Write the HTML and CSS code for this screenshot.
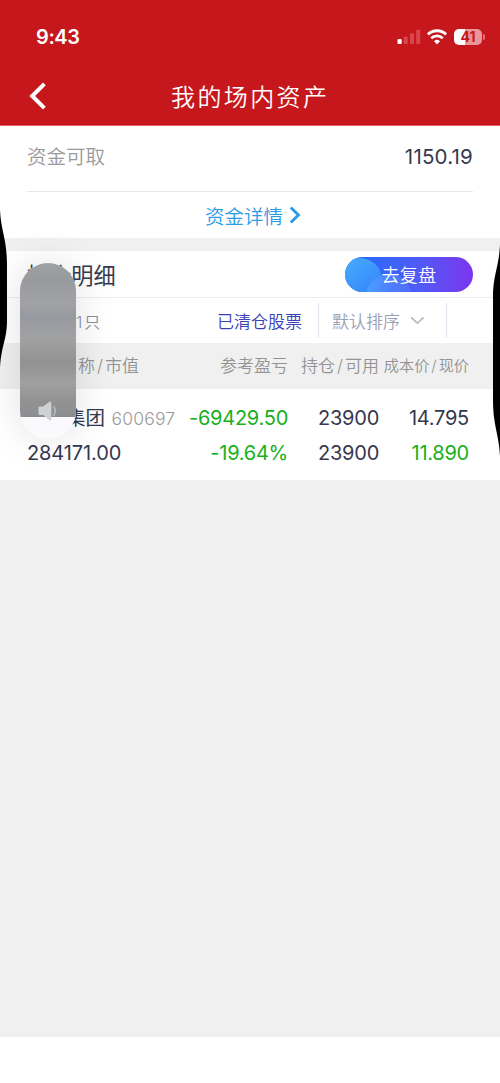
FILE: index.html
```html
<!DOCTYPE html>
<html lang="zh-CN">
<head>
    <meta charset="UTF-8">
    <meta name="viewport" content="width=device-width, initial-scale=1.0">
    <title>我的场内资产</title>
    <link rel="stylesheet" href="styles.css">
</head>
<body>
    <div class="page">
        <header class="header">
            <div class="status-bar">
                <span class="time">9:43</span>
                <div class="status-icons">
                    <svg class="signal" width="24" height="16" viewBox="0 0 24 16">
                        <rect x="0.5" y="10" width="4.2" height="5" rx="1" fill="#fff"/>
                        <rect x="6.8" y="7.5" width="4" height="7.5" rx="1" fill="#d8464c"/>
                        <rect x="13" y="4.3" width="4" height="10.7" rx="1" fill="#d8464c"/>
                        <rect x="19.2" y="0.8" width="4" height="14.2" rx="1" fill="#d8464c"/>
                    </svg>
                    <svg class="wifi" width="20" height="16" viewBox="0 0 20 16">
                        <path d="M0.9 5.4a13.2 13.2 0 0 1 18.2 0" fill="none" stroke="#fff" stroke-width="2.9"/>
                        <path d="M4.2 9.2a8.4 8.4 0 0 1 11.6 0" fill="none" stroke="#fff" stroke-width="2.7"/>
                        <path d="M10 15.4l-3-3.2a4.5 4.5 0 0 1 6 0z" fill="#fff"/>
                    </svg>
                    <div class="battery">41</div>
                </div>
            </div>
            <div class="nav">
                <svg class="back" width="18" height="28" viewBox="0 0 18 28">
                    <path d="M16.4 1.8L4.2 14l12.2 12.2" fill="none" stroke="#fff" stroke-width="4"/>
                </svg>
                <h1>我的场内资产</h1>
            </div>
        </header>

        <section class="funds">
            <div class="funds-row">
                <span class="label">资金可取</span>
                <span class="amount">1150.19</span>
            </div>
            <div class="funds-link">
                <span>资金详情</span>
                <svg width="12" height="18" viewBox="0 0 12 18">
                    <path d="M1.8 1.5L9.4 9l-7.6 7.5" fill="none" stroke="#2b9be6" stroke-width="2.9"/>
                </svg>
            </div>
        </section>

        <section class="positions">
            <div class="positions-title">
                <h2>持仓明细</h2>
                <div class="review">
                    <svg width="128" height="35" viewBox="0 0 128 35">
                        <defs>
                            <linearGradient id="blueA" x1="0.2" y1="0" x2="0.9" y2="0.9">
                                <stop offset="0" stop-color="#45acfc"/>
                                <stop offset="1" stop-color="#3580fb"/>
                            </linearGradient>
                            <linearGradient id="blueB" x1="0" y1="0" x2="1" y2="0">
                                <stop offset="0" stop-color="#4a9cff"/>
                                <stop offset="1" stop-color="#5a78fb" stop-opacity="0.5"/>
                            </linearGradient>
                        </defs>
                        <circle cx="15" cy="23" r="22" fill="url(#blueA)"/>
                        <circle cx="44" cy="40" r="23" fill="url(#blueB)"/>
                    </svg>
                    <span>去复盘</span>
                </div>
            </div>
            <div class="filters">
                <span class="count">共持有<b>1</b>只</span>
                <span class="cleared">已清仓股票</span>
                <span class="sort">默认排序
                    <svg width="15" height="9" viewBox="0 0 15 9">
                        <path d="M1.2 1.5l6.2 5.6 6.2-5.6" fill="none" stroke="#b9bac2" stroke-width="1.7"/>
                    </svg>
                </span>
            </div>
            <div class="grid table-head">
                <span>股票名称<i>/</i>市值</span>
                <span>参考盈亏</span>
                <span>持仓<i>/</i>可用</span>
                <span class="price-head">成本价<i>/</i>现价</span>
            </div>
            <div class="stock">
                <div class="grid">
                    <span class="name">欧亚集团 <small>600697</small></span>
                    <span class="down">-69429.50</span>
                    <span>23900</span>
                    <span>14.795</span>
                </div>
                <div class="grid">
                    <span class="value">284171.00</span>
                    <span class="down">-19.64%</span>
                    <span>23900</span>
                    <span class="down">11.890</span>
                </div>
            </div>
        </section>
        <div class="home-area"></div>

        <!-- volume slider -->
        <div class="volume">
            <div class="volume-level"></div>
            <svg class="speaker" width="22" height="20" viewBox="0 0 22 20">
                <path d="M0.5 6.5q0-1 1-1h3.8L11.5 0.8q1.8-1 1.8 1v16.4q0 2-1.8 1L5.3 14H1.5q-1 0-1-1z" fill="#d0d1d2"/>
                <path d="M16 6q2.4 4 0 8" fill="none" stroke="#b4b5b7" stroke-width="1.8" stroke-linecap="round"/>
            </svg>
        </div>

        <!-- side button bulges -->
        <svg class="bulge bulge-left" width="8" height="160" viewBox="0 0 8 160">
            <path d="M0 0C1 22 7 28 7 56v54C7 130 1.5 134 0 158z"/>
        </svg>
        <svg class="bulge bulge-right" width="8" height="212" viewBox="0 0 8 212">
            <path d="M8 0C7 24 1 30 1 54v102C1 182 7 190 8 212z"/>
        </svg>
    </div>
</body>
</html>
```
FILE: styles.css
```css
* {
    box-sizing: border-box;
}
body {
    margin: 0;
    background: #fff;
    font-family: Inter, "Noto Sans CJK SC", sans-serif;
    font-weight: 350;
    color: #36384f;
}
h1, h2 {
    margin: 0;
    font-weight: 350;
}
svg {
    display: block;
}
.page {
    position: relative;
    width: 500px;
    height: 1083px;
    display: flex;
    flex-direction: column;
    overflow: hidden;
    background: #f0f0f0;
}

/* Header */
.header {
    height: 126px;
    flex: none;
    background: #c6171c;
    border-bottom: 1px solid #e8626c;
    color: #fff;
}
.status-bar {
    height: 66px;
    display: flex;
    justify-content: space-between;
    padding: 23px 15px 0 36px;
}
.time {
    font-size: 20px;
    font-weight: 600;
    line-height: 28px;
    letter-spacing: -0.4px;
}
.status-icons {
    display: flex;
    align-items: center;
    height: 28px;
}
.wifi {
    margin: 0 7px 0 6px;
}
.battery {
    position: relative;
    width: 28px;
    height: 16px;
    margin-right: 3px;
    border-radius: 5px;
    background: linear-gradient(90deg, #fff 41%, #eb949a 41%);
    color: #c6171c;
    font-size: 14px;
    font-weight: 700;
    line-height: 16px;
    text-align: center;
}
.battery::after {
    content: "";
    position: absolute;
    right: -3px;
    top: 5px;
    width: 2px;
    height: 6px;
    border-radius: 0 2px 2px 0;
    background: #e3747a;
}
.nav {
    height: 59px;
    display: flex;
    align-items: center;
    padding-left: 28px;
}
.nav h1 {
    margin-left: 125px;
    padding-top: 4px;
    font-size: 24px;
    line-height: 36px;
    letter-spacing: 2.4px;
}

/* Funds */
.funds {
    height: 112px;
    flex: none;
    padding: 0 27px;
    background: #fff;
}
.funds-row {
    height: 66px;
    display: flex;
    justify-content: space-between;
    padding-top: 16px;
    border-bottom: 1px solid #e8e8ea;
    font-size: 20px;
    line-height: 30px;
}
.label {
    color: #999;
    font-size: 19.5px;
}
.amount {
    font-size: 20.5px;
    font-weight: 400;
    letter-spacing: 0.2px;
}
.funds-link {
    height: 46px;
    display: flex;
    justify-content: center;
    align-items: center;
    gap: 6px;
    padding-left: 6px;
    color: #2b9be6;
    font-size: 19.5px;
}

/* Positions */
.positions {
    height: 229px;
    flex: none;
    margin-top: 13px;
    background: #fff;
}
.positions-title {
    height: 47px;
    display: flex;
    justify-content: space-between;
    align-items: center;
    padding: 0 27px;
    border-bottom: 1px solid #ececf0;
}
.positions-title h2 {
    font-size: 22.2px;
    font-weight: 400;
}
.review {
    position: relative;
    width: 128px;
    height: 35px;
    border-radius: 18px;
    overflow: hidden;
    background: linear-gradient(90deg, #2e68f8 20%, #4d5df6 55%, #7b35ee);
    color: #fff;
    font-size: 18px;
    line-height: 37px;
    text-align: center;
}
.review svg {
    position: absolute;
    left: 0;
    top: 0;
}
.review span {
    position: relative;
    letter-spacing: 0.4px;
}
.filters {
    height: 45px;
    display: flex;
    align-items: center;
    padding-left: 27px;
    font-size: 17px;
}
.count {
    width: 190px;
    color: #8d8fa0;
    font-size: 16px;
}
.count b {
    margin: 0 2px 0 1px;
    font-weight: 350;
}
.cleared {
    width: 101px;
    color: #3940b8;
}
.sort {
    height: 35px;
    width: 129px;
    display: flex;
    align-items: center;
    gap: 10px;
    padding-left: 13px;
    border-left: 1px solid #e2e2ec;
    border-right: 1px solid #e2e2ec;
    color: #9a9eb4;
}
.grid {
    display: grid;
    grid-template-columns: 162px 99px 91px 90px;
    padding-left: 27px;
    text-align: right;
    white-space: nowrap;
}
.grid span:first-child {
    text-align: left;
}
.table-head {
    height: 46px;
    background: #f0f0f0;
    color: #939393;
    font-size: 17px;
    line-height: 46px;
}
.table-head i {
    margin: 0 2px;
    font-style: normal;
}
.table-head .price-head {
    font-size: 15.2px;
}
.stock {
    padding-top: 12px;
    font-size: 20px;
    font-weight: 400;
    line-height: 34px;
    letter-spacing: -0.25px;
}
.name {
    font-size: 19.5px;
    letter-spacing: 0;
}
.name small {
    margin-left: 1px;
    color: #999;
    font-size: 17.5px;
    font-weight: 350;
    letter-spacing: 0.2px;
}
.value {
    letter-spacing: -0.1px;
}
.down {
    color: #18b01c;
}
.home-area {
    height: 46px;
    flex: none;
    margin-top: auto;
    background: #fff;
}

/* Overlays */
.volume {
    position: absolute;
    left: 20px;
    top: 263px;
    width: 56px;
    height: 176px;
    border-radius: 28px;
    overflow: hidden;
    background: #fafafd;
    box-shadow: 0 0 40px rgba(0, 0, 0, 0.12);
}
.volume-level {
    height: 154px;
    background: linear-gradient(#a0a1a3, #989a9d 10%, #a1a2a4 27%, #96999f 35%, #a1a2a3 48%, #929292 65%, #a0a0a0 78%, #929292 90%, #8c8d90);
}
.speaker {
    position: absolute;
    left: 18px;
    top: 138px;
}
.bulge {
    position: absolute;
}
.bulge-left {
    left: 0;
    top: 210px;
}
.bulge-right {
    right: 0;
    top: 244px;
}
```
